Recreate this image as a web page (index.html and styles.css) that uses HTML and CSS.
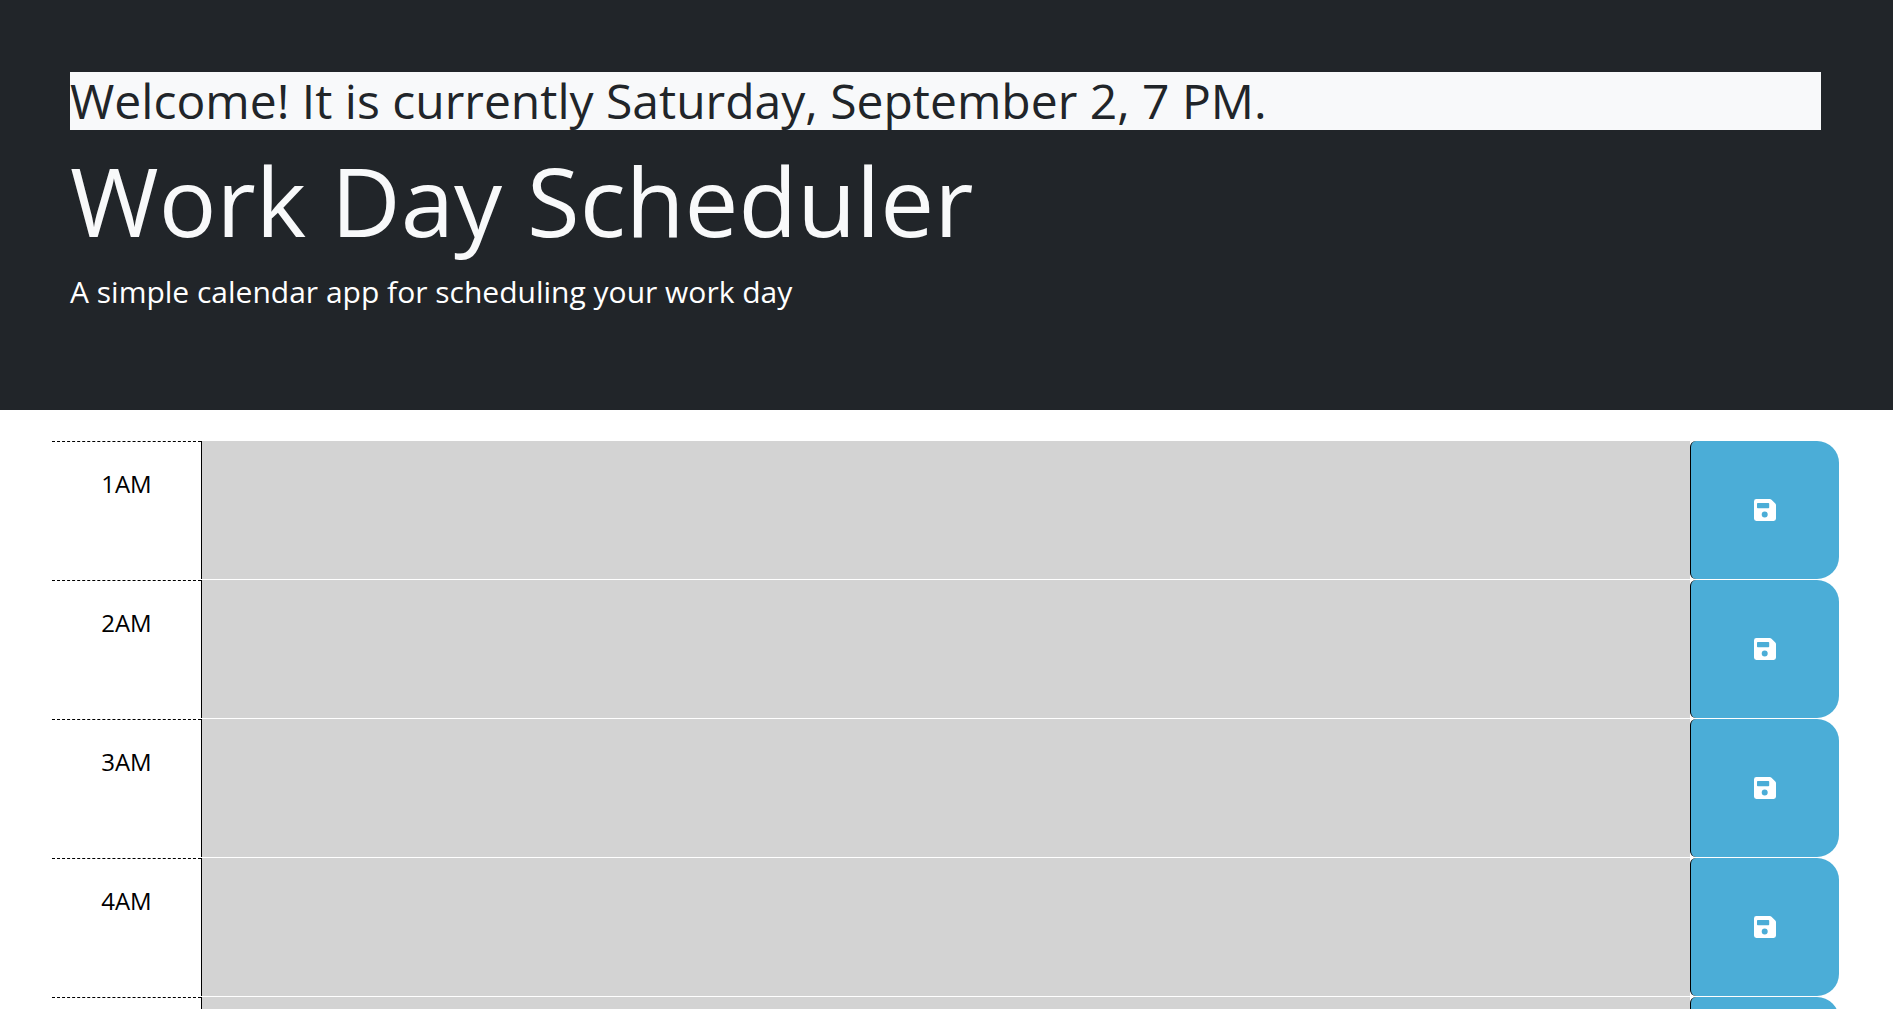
FILE: index.html
```html
<!DOCTYPE html>
<html lang="en">
<head>
  <meta charset="UTF-8">
  <meta name="viewport" content="width=device-width, initial-scale=1">
  <title>Work Day Scheduler</title>
  <link rel="stylesheet" href="styles.css">
</head>
<body>
  <svg class="sprite" aria-hidden="true">
    <symbol id="save" viewBox="0 0 22 22">
      <path fill-rule="evenodd" d="M2.4 0H15.8C16.4 0 17 .2 17.5 .7L21.300 4.500C21.800 5 22 5.600 22 6.200V19.600A2.400 2.400 0 0 1 19.600 22H2.400A2.400 2.400 0 0 1 0 19.600V2.400A2.400 2.400 0 0 1 2.400 0ZM3.800 4A.8 .8 0 0 0 3 4.800V8.500A.8 .8 0 0 0 3.800 9.300H14.400A.8 .8 0 0 0 15.200 8.500V4.800A.8 .8 0 0 0 14.400 4ZM10.700 12.600A3 3 0 1 0 10.700 18.600A3 3 0 1 0 10.700 12.600Z"/>
    </symbol>
  </svg>

  <header class="banner">
    <p class="today">Welcome! It is currently Saturday, September 2, 7 PM.</p>
    <h1 class="title">Work Day Scheduler</h1>
    <p class="lead">A simple calendar app for scheduling your work day</p>
  </header>

  <main class="schedule">
    <div class="time-block">
      <label class="hour" for="hour-1">1AM</label>
      <textarea class="description" id="hour-1"></textarea>
      <button class="save" type="button" aria-label="Save"><svg class="icon"><use href="#save"/></svg></button>
    </div>
    <div class="time-block">
      <label class="hour" for="hour-2">2AM</label>
      <textarea class="description" id="hour-2"></textarea>
      <button class="save" type="button" aria-label="Save"><svg class="icon"><use href="#save"/></svg></button>
    </div>
    <div class="time-block">
      <label class="hour" for="hour-3">3AM</label>
      <textarea class="description" id="hour-3"></textarea>
      <button class="save" type="button" aria-label="Save"><svg class="icon"><use href="#save"/></svg></button>
    </div>
    <div class="time-block">
      <label class="hour" for="hour-4">4AM</label>
      <textarea class="description" id="hour-4"></textarea>
      <button class="save" type="button" aria-label="Save"><svg class="icon"><use href="#save"/></svg></button>
    </div>
    <div class="time-block">
      <label class="hour" for="hour-5">5AM</label>
      <textarea class="description" id="hour-5"></textarea>
      <button class="save" type="button" aria-label="Save"><svg class="icon"><use href="#save"/></svg></button>
    </div>
  </main>
</body>
</html>
```
FILE: styles.css
```css
* {
  box-sizing: border-box;
}

body {
  margin: 0;
  background: #fff;
  color: #000;
  font-family: "Open Sans", "Noto Sans", sans-serif;
  font-size: 24px;
  line-height: 36px;
}

.sprite {
  display: none;
}

.banner {
  padding: 72px 72px 96px 70px;
  background: #212529;
  color: #f8f9fa;
}

.today {
  margin: 0 0 12px;
  background: #f8f9fa;
  color: #212529;
  font-size: 48px;
  font-weight: 400;
  line-height: 58px;
}

.title {
  margin: 0 0 12px;
  font-size: 96px;
  font-weight: 400;
  line-height: 115px;
}

.lead {
  margin: 0;
  color: #fff;
  font-size: 30px;
  line-height: 45px;
}

.schedule {
  display: flex;
  flex-direction: column;
  gap: 1px;
  padding: 31px 54px 31px 52px;
}

.time-block {
  display: grid;
  grid-template-columns: 1fr 10fr 1fr;
  min-height: 138px;
}

.hour {
  padding: 24px 0;
  border-top: 1px dashed #000;
  text-align: center;
}

.description {
  margin: 0;
  padding: 8px;
  border: 0;
  border-left: 1px solid #000;
  border-radius: 0;
  background: #d3d3d3;
  color: #fff;
  font: inherit;
  resize: none;
}

.save {
  display: flex;
  align-items: center;
  justify-content: center;
  padding: 0;
  border: 0;
  border-left: 1px solid #000;
  border-radius: 6px 22px 22px 6px;
  background: #4badd7;
  color: #fff;
  cursor: pointer;
}

.icon {
  width: 22px;
  height: 22px;
  fill: currentColor;
}
```
